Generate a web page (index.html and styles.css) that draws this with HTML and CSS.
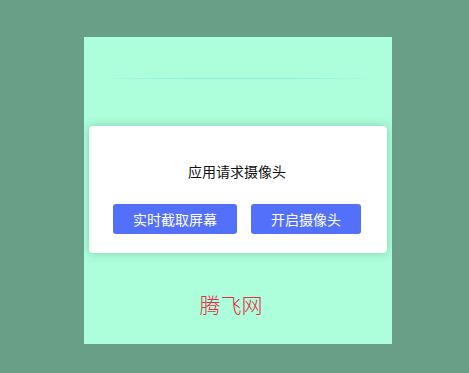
FILE: index.html
```html
<!DOCTYPE html>
<html>
<head>
<meta charset="utf-8">
<link rel="stylesheet" href="styles.css">
</head>
<body>
<div class="panel">
  <div class="line"></div>
  <div class="card">
    <div class="title">应用请求摄像头</div>
    <div class="actions">
      <button class="btn btn-wide">实时截取屏幕</button>
      <button class="btn btn-narrow">开启摄像头</button>
    </div>
  </div>
  <div class="brand">腾飞网</div>
</div>
</body>
</html>
```
FILE: styles.css
```css
html, body {
  margin: 0;
  padding: 0;
}
body {
  background: #699f87;
  width: 469px;
  height: 373px;
  overflow: hidden;
  font-family: "Noto Sans CJK SC", "Noto Sans", sans-serif;
}
.panel {
  margin: 37px 0 0 84px;
  width: 308px;
  height: 307px;
  background: #adfedb;
  padding-top: 41px;
  box-sizing: border-box;
}
.line {
  height: 1px;
  margin: 0 17px 0 16px;
  background: linear-gradient(90deg, rgba(140,240,225,0) 0%, rgba(140,240,225,1) 30%, rgba(140,240,225,1) 70%, rgba(140,240,225,0) 100%);
}
.card {
  margin: 47px 5px 0 5px;
  height: 127px;
  background: #fff;
  border-radius: 4px;
  box-shadow: 0 0 10px rgba(40, 120, 90, 0.35);
  box-sizing: border-box;
  padding-top: 36px;
}
.title {
  text-align: center;
  font-size: 14px;
  line-height: 18px;
  color: #111;
  padding-right: 2px;
}
.actions {
  display: flex;
  gap: 14px;
  margin-top: 24px;
  padding-left: 24px;
}
.btn {
  height: 30px;
  border: none;
  border-radius: 3px;
  background: #5270fa;
  color: #fff;
  font-family: "Noto Sans CJK SC", "Noto Sans", sans-serif;
  font-size: 14px;
  padding: 0;
}
.btn-wide { width: 124px; }
.btn-narrow { width: 110px; }
.brand {
  margin-top: 37px;
  text-align: center;
  padding-right: 14px;
  font-size: 21px;
  line-height: 28px;
  font-weight: 300;
  color: #e62e44;
}
```
